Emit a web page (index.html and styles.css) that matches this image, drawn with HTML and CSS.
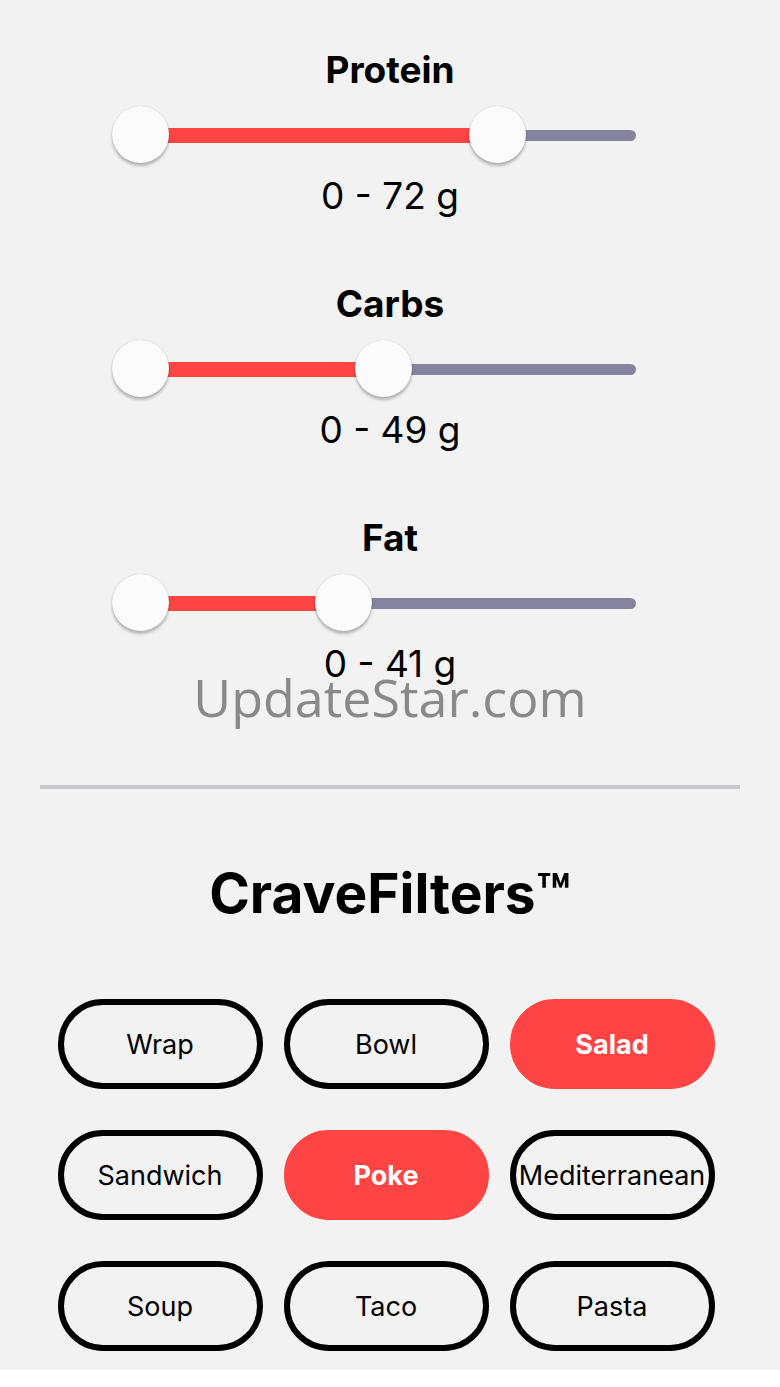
FILE: index.html
```html
<!DOCTYPE html>
<html>
<head>
<meta charset="utf-8">
<link rel="stylesheet" href="styles.css">
</head>
<body>
<div class="screen">
  <section class="macro">
    <h2 class="macro-title">Protein</h2>
    <div class="slider" style="--v:72%">
      <div class="track-on"></div>
      <div class="track-off"></div>
      <div class="thumb thumb-min"></div>
      <div class="thumb thumb-max"></div>
    </div>
    <div class="macro-value">0 - 72 g</div>
  </section>
  <section class="macro">
    <h2 class="macro-title">Carbs</h2>
    <div class="slider" style="--v:49%">
      <div class="track-on"></div>
      <div class="track-off"></div>
      <div class="thumb thumb-min"></div>
      <div class="thumb thumb-max"></div>
    </div>
    <div class="macro-value">0 - 49 g</div>
  </section>
  <section class="macro">
    <h2 class="macro-title">Fat</h2>
    <div class="slider" style="--v:41%">
      <div class="track-on"></div>
      <div class="track-off"></div>
      <div class="thumb thumb-min"></div>
      <div class="thumb thumb-max"></div>
    </div>
    <div class="macro-value">0 - 41 g</div>
  </section>

  <div class="watermark">UpdateStar.com</div>

  <hr class="divider">

  <h1 class="filters-title">CraveFilters™</h1>

  <div class="chips">
    <div class="chip">Wrap</div>
    <div class="chip">Bowl</div>
    <div class="chip chip-on">Salad</div>
    <div class="chip">Sandwich</div>
    <div class="chip chip-on">Poke</div>
    <div class="chip">Mediterranean</div>
    <div class="chip">Soup</div>
    <div class="chip">Taco</div>
    <div class="chip">Pasta</div>
  </div>
</div>
</body>
</html>
```

FILE: styles.css
```css
html, body {
  margin: 0;
  padding: 0;
  background: #ffffff;
}

.screen {
  position: relative;
  height: 1370px;
  background: #f2f2f2;
  padding-top: 50px;
  box-sizing: border-box;
  font-family: Inter, "Noto Sans", sans-serif;
  color: #000;
  overflow: hidden;
}

.macro {
  display: flex;
  flex-direction: column;
  align-items: center;
  margin-bottom: 68px;
}

.macro-title {
  margin: 0;
  font-size: 37px;
  line-height: 40px;
  font-weight: 700;
}

.slider {
  position: relative;
  width: 496px;
  height: 60px;
  margin-top: 15px;
  margin-left: -4px;
}

.track-on {
  position: absolute;
  left: 0;
  top: 23px;
  height: 15px;
  width: var(--v);
  background: #ff4444;
}

.track-off {
  position: absolute;
  left: var(--v);
  right: 0;
  top: 25px;
  height: 11px;
  background: #8683a0;
  border-radius: 0 6px 6px 0;
}

.thumb {
  position: absolute;
  top: 1px;
  width: 57px;
  height: 57px;
  border-radius: 50%;
  background: #fbfbfc;
  box-shadow: 0 3px 3px rgba(0, 0, 0, 0.25), 0 0 1px rgba(0, 0, 0, 0.25);
}

.thumb-min {
  left: -28px;
}

.thumb-max {
  left: calc(var(--v) - 28px);
}

.macro-value {
  margin-top: 11px;
  font-size: 37px;
  line-height: 40px;
  font-weight: 400;
}

.watermark {
  position: absolute;
  left: 0;
  right: 0;
  top: 665px;
  text-align: center;
  font-family: "Open Sans", "Noto Sans", sans-serif;
  font-size: 52px;
  line-height: 64px;
  color: rgba(110, 110, 110, 0.8);
  pointer-events: none;
}

.divider {
  margin: 101px 40px 0;
  height: 4px;
  border: 0;
  background: #c6c6cb;
}

.filters-title {
  margin: 72px 0 0;
  text-align: center;
  font-size: 55px;
  line-height: 64px;
  font-weight: 700;
}

.chips {
  display: grid;
  grid-template-columns: repeat(3, 205px);
  grid-auto-rows: 90px;
  column-gap: 21px;
  row-gap: 41px;
  justify-content: center;
  margin-top: 74px;
  margin-left: -8px;
}

.chip {
  display: flex;
  align-items: center;
  justify-content: center;
  box-sizing: border-box;
  border: 6px solid #000;
  border-radius: 45px;
  font-size: 27px;
  font-weight: 400;
  white-space: nowrap;
  overflow: hidden;
}

.chip-on {
  border-color: #ff4444;
  background: #ff4444;
  color: #fff;
  font-weight: 700;
}
```
